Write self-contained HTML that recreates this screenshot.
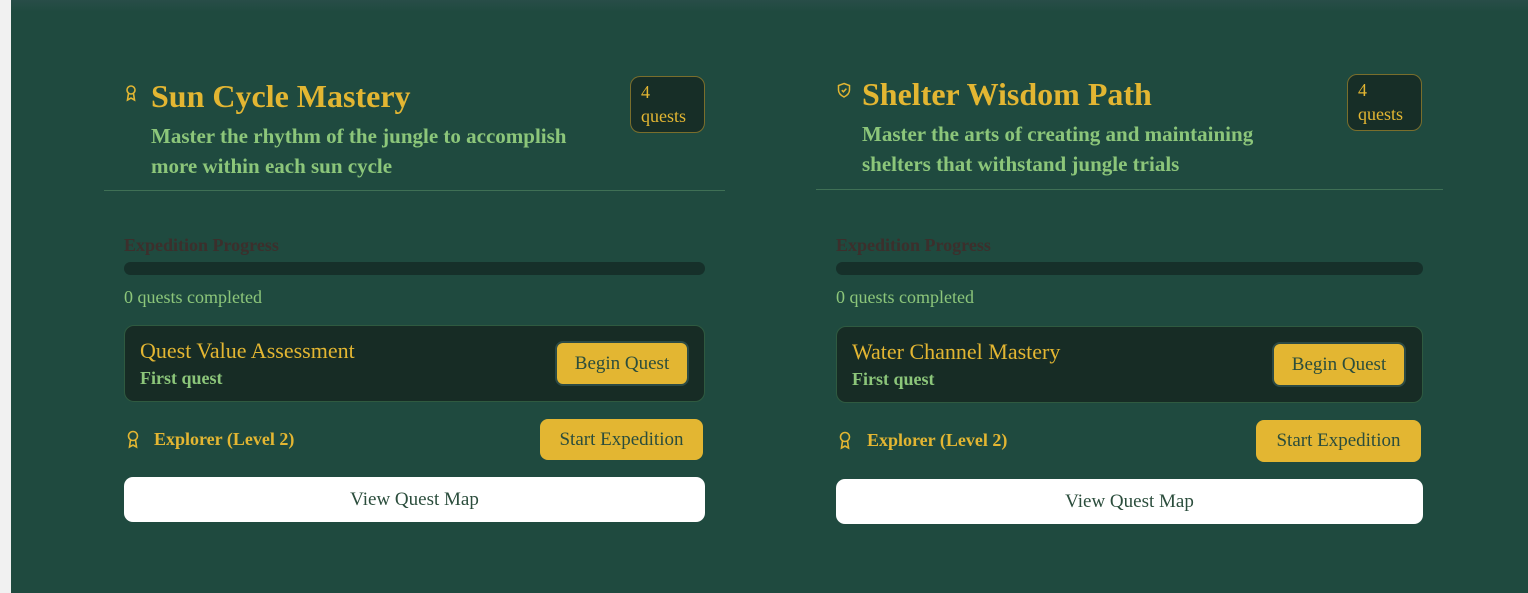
<!DOCTYPE html>
<html><head><style>
*{margin:0;padding:0;box-sizing:border-box}
body{width:1528px;height:593px;overflow:hidden;background:#1f4a3f;font-family:"Liberation Serif",serif;position:relative}
.strip{position:absolute;left:0;top:0;width:11px;height:593px;background:#f1f1f1}
.topg{position:absolute;left:11px;top:0;right:0;height:12px;background:linear-gradient(#284d48,#1f4a3f)}
.a{position:absolute}
.title{color:#e3b632;font-weight:bold;font-size:32px;white-space:nowrap}
.desc{color:#8cc67a;font-weight:bold;font-size:21px;line-height:30px}
.badge{border:1px solid #7a6e2c;background:#172e27;border-radius:10px;color:#e3b632;font-size:18px;line-height:24px;padding:3px 10px}
.div{height:1px;background:#3f7055}
.prog{color:#3c2f2c;font-weight:bold;font-size:18px}
.bar{height:13px;border-radius:7px;background:#16302a}
.done{color:#8cc67a;font-size:18px}
.qbox{background:#172c25;border:1px solid #2f5a40;border-radius:10px;height:77px}
.qt{color:#e3b632;font-size:22px}
.qs{color:#8cc67a;font-weight:bold;font-size:18px}
.btn{background:#e3b632;color:#2b4d3c;font-size:19px;border-radius:8px;text-align:center}
.lvl{color:#e3b632;font-weight:bold;font-size:18px}
.map{background:#fff;border-radius:9px;height:45px;color:#2b4d3c;font-size:19px;text-align:center;line-height:45px}
</style></head><body>
<div class="strip"></div><div class="topg"></div>

<!-- card 1 -->
<svg class="a" style="left:124px;top:84px" width="14" height="18" viewBox="0 0 14 18" fill="none" stroke="#e3b632" stroke-width="1.6"><circle cx="7" cy="6" r="4"/><path d="M4.5 9.5 3.5 16 7 14 10.5 16 9.5 9.5"/></svg>
<div class="a title" style="left:151px;top:78px">Sun Cycle Mastery</div>
<div class="a desc" style="left:151px;top:121px;width:455px">Master the rhythm of the jungle to accomplish more within each sun cycle</div>
<div class="a badge" style="left:630px;top:76px;width:75px;height:57px">4<br>quests</div>
<div class="a div" style="left:104px;top:190px;width:621px"></div>
<div class="a prog" style="left:124px;top:235px">Expedition Progress</div>
<div class="a bar" style="left:124px;top:262px;width:581px"></div>
<div class="a done" style="left:124px;top:287px">0 quests completed</div>
<div class="a qbox" style="left:124px;top:325px;width:581px"></div>
<div class="a qt" style="left:140px;top:338px">Quest Value Assessment</div>
<div class="a qs" style="left:140px;top:368px">First quest</div>
<div class="a btn" style="left:555px;top:341px;width:134px;height:45px;line-height:41px;border:2px solid #2c4a45">Begin Quest</div>
<svg class="a" style="left:126px;top:430px" width="14" height="19" viewBox="0 0 14 19" fill="none" stroke="#e3b632" stroke-width="1.6"><circle cx="7" cy="6" r="4.5"/><path d="M4.5 10 3.5 17 7 15 10.5 17 9.5 10"/></svg>
<div class="a lvl" style="left:154px;top:429px">Explorer (Level 2)</div>
<div class="a btn" style="left:540px;top:419px;width:163px;height:41px;line-height:41px">Start Expedition</div>
<div class="a map" style="left:124px;top:477px;width:581px">View Quest Map</div>

<!-- card 2 -->
<svg class="a" style="left:837px;top:82px" width="14" height="17" viewBox="0 0 14 17" fill="none" stroke="#e3b632" stroke-width="1.5"><path d="M7 1.5 12.5 3.5V8c0 3.5-2.5 5.5-5.5 7C4 13.5 1.5 11.5 1.5 8V3.5Z"/><path d="M4.8 8.2 6.4 9.8 9.4 6.6"/></svg>
<div class="a title" style="left:862px;top:76px">Shelter Wisdom Path</div>
<div class="a desc" style="left:862px;top:119px;width:440px">Master the arts of creating and maintaining shelters that withstand jungle trials</div>
<div class="a badge" style="left:1347px;top:74px;width:75px;height:57px">4<br>quests</div>
<div class="a div" style="left:816px;top:189px;width:627px"></div>
<div class="a prog" style="left:836px;top:235px">Expedition Progress</div>
<div class="a bar" style="left:836px;top:262px;width:587px"></div>
<div class="a done" style="left:836px;top:287px">0 quests completed</div>
<div class="a qbox" style="left:836px;top:326px;width:587px"></div>
<div class="a qt" style="left:852px;top:339px">Water Channel Mastery</div>
<div class="a qs" style="left:852px;top:369px">First quest</div>
<div class="a btn" style="left:1272px;top:342px;width:134px;height:45px;line-height:41px;border:2px solid #2c4a45">Begin Quest</div>
<svg class="a" style="left:838px;top:431px" width="14" height="19" viewBox="0 0 14 19" fill="none" stroke="#e3b632" stroke-width="1.6"><circle cx="7" cy="6" r="4.5"/><path d="M4.5 10 3.5 17 7 15 10.5 17 9.5 10"/></svg>
<div class="a lvl" style="left:867px;top:430px">Explorer (Level 2)</div>
<div class="a btn" style="left:1256px;top:420px;width:165px;height:42px;line-height:42px">Start Expedition</div>
<div class="a map" style="left:836px;top:479px;width:587px">View Quest Map</div>
</body></html>
